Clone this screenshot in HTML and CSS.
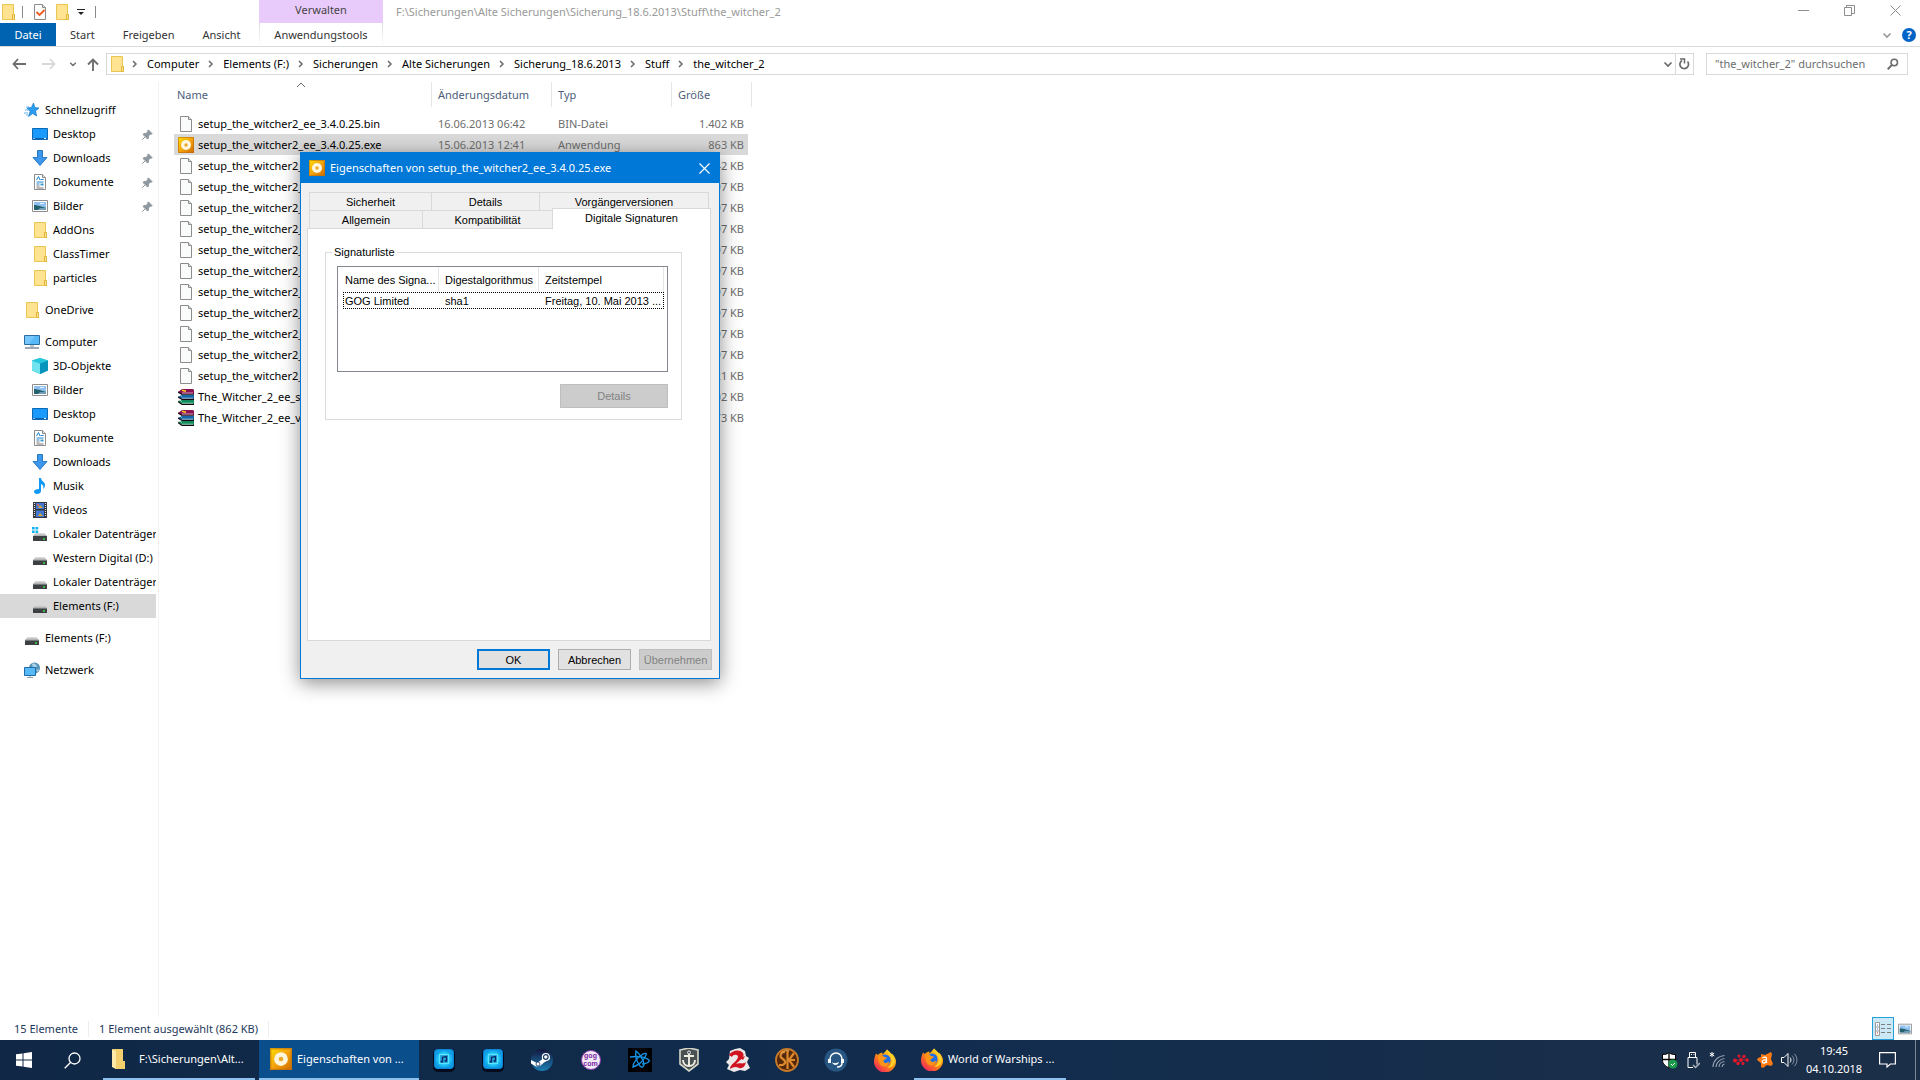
FILE: index.html
```
<!DOCTYPE html>
<html lang="de">
<head>
    <meta charset="UTF-8">
    <meta name="viewport" content="width=device-width, initial-scale=1.0">
    <title>the_witcher_2</title>
    <link rel="stylesheet" href="styles.css">
</head>
<body>
    <!-- Icon set -->
    <svg class="sprite" aria-hidden="true">
        <defs>
            <linearGradient id="gold" x1="0" y1="0" x2="1" y2="1"><stop offset="0" stop-color="#fbe000"/><stop offset=".5" stop-color="#f5a30c"/><stop offset="1" stop-color="#cf6a00"/></linearGradient>
            <linearGradient id="fox" x1="0.9" y1="0" x2="0.1" y2="1"><stop offset="0" stop-color="#ffe52e"/><stop offset=".5" stop-color="#ff8a10"/><stop offset="1" stop-color="#f0146a"/></linearGradient>
            <linearGradient id="drv" x1="0" y1="0" x2="0" y2="1"><stop offset="0" stop-color="#e2e2e2"/><stop offset="1" stop-color="#a9abad"/></linearGradient>
            <linearGradient id="steamg" x1="0" y1="0" x2="0" y2="1"><stop offset="0" stop-color="#14163c"/><stop offset="1" stop-color="#1b7fb5"/></linearGradient>
            <radialGradient id="tune"><stop offset="0" stop-color="#1b8fd0"/><stop offset=".6" stop-color="#27d0fa"/><stop offset="1" stop-color="#0f9be6"/></radialGradient>
        </defs>
        <symbol id="folder" viewBox="0 0 16 16"><path d="M2.5.5h11v10h1v5h-12z" fill="#ffe391" stroke="#eac54f"/><path d="M12.5 10.5h2v5h-2z" fill="#ffe391" stroke="#e3b53a"/></symbol>
        <symbol id="file" viewBox="0 0 16 16"><path d="M2.5.5h8l3 3v12h-11z" fill="#fafbfb" stroke="#8c8c8c"/><path d="M10.5.5v3h3" fill="#ddd" stroke="#8c8c8c"/></symbol>
        <symbol id="check" viewBox="0 0 16 16"><path d="M2.5.5h8l3 3v12h-11z" fill="#fafbfb" stroke="#8c8c8c"/><path d="M10.5.5v3h3" fill="#ddd" stroke="#8c8c8c"/><path d="M4.500 8l3 3 5-5" fill="none" stroke="#f05a1c" stroke-width="1.800"/></symbol>
        <symbol id="gog-exe" viewBox="0 0 16 16"><path d="M0 0h16v16H0z" fill="url(#gold)"/><path d="M.5.5h15v15H.5z" fill="none" stroke="#b86a10" stroke-opacity=".6"/><circle cx="8" cy="8" r="5" fill="#fff6de"/><circle cx="8" cy="8" r="1.700" fill="#e8a92c"/></symbol>
        <symbol id="rar" viewBox="0 0 16 16"><path d="M4 0h11l1 1v4H3L0 3z" fill="#8a1253"/><path d="M3 6h13v4H4L0 8z" fill="#1565a8"/><path d="M3 11h13v4H4l-4-3z" fill="#0f8a5a"/><path d="M4 5.300h12M4 10.400h12M4 15.400h12M0 3l4 2.500M0 8l4 2.500M0 12.500l4 3" fill="none" stroke="#14080e" stroke-width="1.100"/><path d="M0 5l4 2.500M0 10l4 2.500M4 4h11M4 9.200h11M4 14.200h11" fill="none" stroke="#fff" stroke-width=".8" stroke-opacity=".75"/><path d="M4 1.200l4 1" stroke="#ffd21f" stroke-width="1.500"/></symbol>
        <symbol id="star" viewBox="0 0 16 16"><path d="M9.500 1l1.300 4.600 4.200.400-3.500 3 1.200 5-4-2.500-4.200 3 1.600-5L3 6l4.500-.600z" fill="#2b9df0" stroke="#1377c8" stroke-width=".7"/><path d="M2 5h3M1 8h3M0 11h4M2 13h2" stroke="#63b5ef"/></symbol>
        <symbol id="desktop" viewBox="0 0 16 16"><path d="M.5 2.500h15v11H.5z" fill="#1a9bfc" stroke="#0d67b5"/><path d="M1 12.500h14" stroke="#0a5fb0"/><path d="M1.500 12.500h1M12 12.500h2" stroke="#fff"/></symbol>
        <symbol id="download" viewBox="0 0 16 16"><path d="M5.500.5h5v7h4.500L8 15.500 1 7.500h4.500z" fill="#3b97ea" stroke="#2a78c4"/></symbol>
        <symbol id="document" viewBox="0 0 16 16"><path d="M2.500.5h8l3 3v12h-11z" fill="#fff" stroke="#8c8c8c"/><path d="M10.500.5v3h3" fill="#ddd" stroke="#8c8c8c"/><path d="M4.500 6l2-3.500L8 6M8.500 5.500h3M4.500 8h7M4.500 10h3" fill="none" stroke="#2583cf"/><path d="M8.500 9.500h3v2h-3z" fill="#3b97c9"/><path d="M4.500 12h3M4.500 14h7" stroke="#777"/></symbol>
        <symbol id="picture" viewBox="0 0 16 16"><path d="M.5 2.500h15v11H.5z" fill="#fff" stroke="#8c8c8c"/><path d="M2 4h12v8H2z" fill="#8fc1f0"/><path d="M2 7c3 0 6 1 12 3v2H2z" fill="#24606e"/><path d="M8 10h6v2H6z" fill="#6f9db4"/><path d="M8 5.500h4" stroke="#e8f4ff"/></symbol>
        <symbol id="computer" viewBox="0 0 16 16"><path d="M.5 1.500h15v9H.5z" fill="#57b9f8" stroke="#2b6d9b"/><path d="M1 2h10L5 10H1z" fill="#8ad2ff" opacity=".6"/><path d="M6 11h4v2H6z" fill="#b9c3c9"/><path d="M1 14h14" stroke="#7b8c98" stroke-width="1.500"/></symbol>
        <symbol id="cube" viewBox="0 0 16 16"><path d="M8 0l8 2.500v10L8 16 0 12.500v-10z" fill="#14b4d3"/><path d="M0 2.500l8 3V16l-8-3.500z" fill="#6fe3ee"/><path d="M8 5.500l8-3v10L8 16z" fill="#0794bd"/><path d="M8 0l8 2.500-8 3-8-3z" fill="#27c7dd"/></symbol>
        <symbol id="music" viewBox="0 0 16 16"><path d="M7 0h2c0 3 4 4 4 7 0 2-1 3-2 4 1-3 0-4-2-5v7c0 2-2 3-4 3s-3-1-3-2.500S4 11 7 11z" fill="#0d99f5"/></symbol>
        <symbol id="video" viewBox="0 0 16 16"><path d="M1 0h14v16H1z" fill="#33363c"/><path d="M2.500 1v14M13.500 1v14" stroke="#ddd" stroke-width="1.200" stroke-dasharray="1 1"/><path d="M4 1h8v6H4zM4 8.500h8V15H4z" fill="#4178d3"/><path d="M6 6l2-3 3 3zM6 14l2-3 3 3z" fill="#d7a72e"/><path d="M5 2h2v2H5z" fill="#d0645a"/></symbol>
        <symbol id="drive" viewBox="0 0 16 16"><path d="M3.500 7h9L15 10H1z" fill="url(#drv)"/><path d="M1 10h14v5H1z" fill="#3d4042"/><path d="M1 10h14v1H1z" fill="#72777a"/><circle cx="12" cy="13" r="1" fill="#34e04a"/></symbol>
        <symbol id="windrive" viewBox="0 0 16 16"><path d="M3.500 7h9L15 10H1z" fill="url(#drv)"/><path d="M1 10h14v5H1z" fill="#3d4042"/><circle cx="12" cy="13" r="1" fill="#34e04a"/><path d="M0 1h2.700v2.600H0zM3.500 1h2.700v2.600H3.500zM0 4.400h2.700V7H0zM3.500 4.400h2.700V7H3.500z" fill="#12b4f0"/></symbol>
        <symbol id="network" viewBox="0 0 16 16"><circle cx="10.500" cy="6" r="5.500" fill="#5693b8"/><path d="M8 2c2-1 4 0 5 2l-2 3-2-1zM12 8l3-1-1 3z" fill="#a9d3e8"/><path d="M.5 5.500h11v8H.5z" fill="#57b9f8" stroke="#1e6ba5"/><path d="M3 15.500h6M6 14v1" stroke="#8fa3b0"/></symbol>
        <symbol id="pin" viewBox="0 0 12 12"><path d="M7 1l4 4-1 1-1-.3-2 2 .2 2L6 11 3.700 8.300.5 11.500 3.700 8.300 1 6l1.300-1.200 2 .2 2-2L6 2z" fill="#8e979e" stroke="#8e979e"/></symbol>
        <symbol id="chev-r" viewBox="0 0 8 10"><path d="M2 2l3 3-3 3" fill="none" stroke="#6a6a6a" stroke-width="1.500"/></symbol>
        <symbol id="chev-d" viewBox="0 0 10 10"><path d="M1.500 3.500L5 7l3.500-3.500" fill="none" stroke="currentColor" stroke-width="1.700"/></symbol>
        <symbol id="lens" viewBox="0 0 16 16"><circle cx="9.700" cy="6" r="4.300" fill="none" stroke="currentColor" stroke-width="2"/><path d="M6.600 9.200L1 15" stroke="currentColor" stroke-width="2.500"/></symbol>
        <symbol id="tune-icon" viewBox="0 0 22 24"><rect y="1" width="22" height="23" rx="5" fill="#020a1c"/><rect x="1" y="1" width="20" height="20" rx="4" fill="#0b86d8"/><rect x="2" y="2" width="18" height="18" rx="3" fill="url(#tune)"/><rect x="6.500" y="6.500" width="9" height="9" fill="#27a9e0" stroke="#5ce4fc"/><path d="M9.500 13.500V9.300l4-.8v4.200" fill="none" stroke="#082c66" stroke-width="1.400"/><path d="M7.700 13.700h2.300M11.700 12.900h2.300" stroke="#082c66" stroke-width="1.800"/></symbol>
        <symbol id="firefox" viewBox="0 0 22 22"><path d="M2 4l2 1.500C5 4 7 3 8.500 3L8 5c2-1 4-4 5-5 1 2 3 3 4 5l1-1c3 3 4 6 4 8a11 11 0 0 1-22 0C0 9 1 6 2 4z" fill="url(#fox)"/><circle cx="11" cy="10.500" r="5.500" fill="#1d6ee8"/><path d="M4 6c3-1 5 0 6 1.500l3 .5c-1 2-3 2-3.500 3.500C9.500 14 13 14 15 12c0 4-4 6-7 4.500S4 10 4 6z" fill="#ff9416"/><path d="M13 0c-1 3 4 5 4 9 2 4-1 8-4 9 5 1 8-3 7.500-7C20 7 17 3 13 0z" fill="#ffd32a"/></symbol>
    </svg>

    <!-- Explorer window -->
    <div class="explorer">
        <header class="titlebar">
            <div class="quick-access">
                <svg class="icon"><use href="#folder"/></svg>
                <span class="divider"></span>
                <button class="qat" aria-label="Eigenschaften"><svg class="icon"><use href="#check"/></svg></button>
                <button class="qat" aria-label="Neuer Ordner"><svg class="icon"><use href="#folder"/></svg></button>
                <button class="qat-more" aria-label="Anpassen"><svg width="8" height="8" viewBox="0 0 8 8"><path d="M0 1.500h8" stroke="#222"/><path d="M1 4h6L4 7z" fill="#222"/></svg></button>
                <span class="divider"></span>
            </div>
            <div class="context-title">Verwalten</div>
            <div class="window-title">F:\Sicherungen\Alte Sicherungen\Sicherung_18.6.2013\Stuff\the_witcher_2</div>
            <div class="window-controls">
                <button aria-label="Minimieren"><svg width="11" height="11" viewBox="0 0 11 11"><path d="M0 5.500h11"/></svg></button>
                <button aria-label="Wiederherstellen"><svg width="11" height="11" viewBox="0 0 11 11"><path d="M.5 2.500h7v8h-7zM2.500 2.500v-2h8v8h-3"/></svg></button>
                <button aria-label="Schließen"><svg width="11" height="11" viewBox="0 0 11 11"><path d="M.5.5l10 10M10.500.5l-10 10"/></svg></button>
            </div>
        </header>

        <nav class="ribbon">
            <div class="ribbon-tabs">
                <button class="file-tab">Datei</button>
                <button>Start</button>
                <button>Freigeben</button>
                <button>Ansicht</button>
            </div>
            <button class="context-tab">Anwendungstools</button>
            <div class="ribbon-end">
                <button class="collapse" aria-label="Menüband"><svg width="10" height="10"><use href="#chev-d"/></svg></button>
                <button class="help" aria-label="Hilfe">?</button>
            </div>
        </nav>

        <div class="address-row">
            <div class="history">
                <button class="back" aria-label="Zurück"><svg width="14" height="12" viewBox="0 0 14 12"><path d="M14 6H1.500M6 1L1.500 6 6 11" fill="none" stroke="#6e6e6e" stroke-width="1.800"/></svg></button>
                <button class="forward" aria-label="Vorwärts"><svg width="14" height="12" viewBox="0 0 14 12"><path d="M0 6h12.500M8 1l4.500 5L8 11" fill="none" stroke="#d8d8d8" stroke-width="1.800"/></svg></button>
                <button class="recent" aria-label="Verlauf"><svg width="8" height="8"><use href="#chev-d"/></svg></button>
                <button class="up" aria-label="Nach oben"><svg width="12" height="13" viewBox="0 0 12 13"><path d="M6 13V1.500M1 6.500l5-5 5 5" fill="none" stroke="#6e6e6e" stroke-width="1.900"/></svg></button>
            </div>
            <div class="address">
                <svg class="icon"><use href="#folder"/></svg>
                <svg class="crumb-arrow"><use href="#chev-r"/></svg><a href="#">Computer</a>
                <svg class="crumb-arrow"><use href="#chev-r"/></svg><a href="#">Elements (F:)</a>
                <svg class="crumb-arrow"><use href="#chev-r"/></svg><a href="#">Sicherungen</a>
                <svg class="crumb-arrow"><use href="#chev-r"/></svg><a href="#">Alte Sicherungen</a>
                <svg class="crumb-arrow"><use href="#chev-r"/></svg><a href="#">Sicherung_18.6.2013</a>
                <svg class="crumb-arrow"><use href="#chev-r"/></svg><a href="#">Stuff</a>
                <svg class="crumb-arrow"><use href="#chev-r"/></svg><a href="#">the_witcher_2</a>
                <button class="address-drop" aria-label="Vorherige Orte"><svg class="small-icon"><use href="#chev-d"/></svg></button>
                <button class="refresh" aria-label="Aktualisieren"><svg width="11" height="12" viewBox="0 0 11 12"><path d="M3 2.600A4.300 4.300 0 1 0 8.500 3.500" fill="none" stroke="#6a6a6a" stroke-width="1.700"/><path d="M5.500 5.500V1H1" fill="none" stroke="#6a6a6a" stroke-width="1.500"/></svg></button>
            </div>
            <div class="search">
                <input type="text" aria-label="Suchen" placeholder="&quot;the_witcher_2&quot; durchsuchen">
                <svg width="12" height="12"><use href="#lens"/></svg>
            </div>
        </div>

        <div class="content">
            <aside class="sidebar">
                <ul>
                    <li class="root"><svg class="icon"><use href="#star"/></svg><span>Schnellzugriff</span></li>
                    <li><svg class="icon"><use href="#desktop"/></svg><span>Desktop</span><svg class="pin"><use href="#pin"/></svg></li>
                    <li><svg class="icon"><use href="#download"/></svg><span>Downloads</span><svg class="pin"><use href="#pin"/></svg></li>
                    <li><svg class="icon"><use href="#document"/></svg><span>Dokumente</span><svg class="pin"><use href="#pin"/></svg></li>
                    <li><svg class="icon"><use href="#picture"/></svg><span>Bilder</span><svg class="pin"><use href="#pin"/></svg></li>
                    <li><svg class="icon"><use href="#folder"/></svg><span>AddOns</span></li>
                    <li><svg class="icon"><use href="#folder"/></svg><span>ClassTimer</span></li>
                    <li><svg class="icon"><use href="#folder"/></svg><span>particles</span></li>
                </ul>
                <ul>
                    <li class="root"><svg class="icon"><use href="#folder"/></svg><span>OneDrive</span></li>
                </ul>
                <ul>
                    <li class="root"><svg class="icon"><use href="#computer"/></svg><span>Computer</span></li>
                    <li><svg class="icon"><use href="#cube"/></svg><span>3D-Objekte</span></li>
                    <li><svg class="icon"><use href="#picture"/></svg><span>Bilder</span></li>
                    <li><svg class="icon"><use href="#desktop"/></svg><span>Desktop</span></li>
                    <li><svg class="icon"><use href="#document"/></svg><span>Dokumente</span></li>
                    <li><svg class="icon"><use href="#download"/></svg><span>Downloads</span></li>
                    <li><svg class="icon"><use href="#music"/></svg><span>Musik</span></li>
                    <li><svg class="icon"><use href="#video"/></svg><span>Videos</span></li>
                    <li><svg class="icon"><use href="#windrive"/></svg><span>Lokaler Datenträger</span></li>
                    <li><svg class="icon"><use href="#drive"/></svg><span>Western Digital (D:)</span></li>
                    <li><svg class="icon"><use href="#drive"/></svg><span>Lokaler Datenträger</span></li>
                    <li class="selected"><svg class="icon"><use href="#drive"/></svg><span>Elements (F:)</span></li>
                </ul>
                <ul>
                    <li class="root"><svg class="icon"><use href="#drive"/></svg><span>Elements (F:)</span></li>
                </ul>
                <ul>
                    <li class="root"><svg class="icon"><use href="#network"/></svg><span>Netzwerk</span></li>
                </ul>
            </aside>

            <main class="file-list">
                <table class="files">
                    <thead>
                        <tr><th class="col-name">Name<svg class="sort" viewBox="0 0 10 6"><path d="M1 5l4-4 4 4" fill="none" stroke="#6a6a6a"/></svg></th><th class="col-date">Änderungsdatum</th><th class="col-type">Typ</th><th class="col-size">Größe</th></tr>
                    </thead>
                    <tbody>
                        <tr><td><svg class="icon"><use href="#file"/></svg>setup_the_witcher2_ee_3.4.0.25.bin</td><td>16.06.2013 06:42</td><td>BIN-Datei</td><td>1.402 KB</td></tr>
                        <tr class="selected"><td><svg class="icon"><use href="#gog-exe"/></svg>setup_the_witcher2_ee_3.4.0.25.exe</td><td>15.06.2013 12:41</td><td>Anwendung</td><td>863 KB</td></tr>
                        <tr><td><svg class="icon"><use href="#file"/></svg>setup_the_witcher2_ee</td><td></td><td></td><td>42 KB</td></tr>
                        <tr><td><svg class="icon"><use href="#file"/></svg>setup_the_witcher2_ee</td><td></td><td></td><td>97 KB</td></tr>
                        <tr><td><svg class="icon"><use href="#file"/></svg>setup_the_witcher2_ee</td><td></td><td></td><td>97 KB</td></tr>
                        <tr><td><svg class="icon"><use href="#file"/></svg>setup_the_witcher2_ee</td><td></td><td></td><td>97 KB</td></tr>
                        <tr><td><svg class="icon"><use href="#file"/></svg>setup_the_witcher2_ee</td><td></td><td></td><td>97 KB</td></tr>
                        <tr><td><svg class="icon"><use href="#file"/></svg>setup_the_witcher2_ee</td><td></td><td></td><td>97 KB</td></tr>
                        <tr><td><svg class="icon"><use href="#file"/></svg>setup_the_witcher2_ee</td><td></td><td></td><td>97 KB</td></tr>
                        <tr><td><svg class="icon"><use href="#file"/></svg>setup_the_witcher2_ee</td><td></td><td></td><td>97 KB</td></tr>
                        <tr><td><svg class="icon"><use href="#file"/></svg>setup_the_witcher2_ee</td><td></td><td></td><td>97 KB</td></tr>
                        <tr><td><svg class="icon"><use href="#file"/></svg>setup_the_witcher2_ee</td><td></td><td></td><td>97 KB</td></tr>
                        <tr><td><svg class="icon"><use href="#file"/></svg>setup_the_witcher2_ee</td><td></td><td></td><td>21 KB</td></tr>
                        <tr><td><svg class="icon"><use href="#rar"/></svg>The_Witcher_2_ee_s</td><td></td><td></td><td>02 KB</td></tr>
                        <tr><td><svg class="icon"><use href="#rar"/></svg>The_Witcher_2_ee_v</td><td></td><td></td><td>73 KB</td></tr>
                    </tbody>
                </table>
            </main>
        </div>

        <footer class="statusbar">
            <span>15 Elemente</span>
            <span>1 Element ausgewählt (862 KB)</span>
            <div class="view-modes">
                <button class="active" aria-label="Details"><svg width="18" height="14" viewBox="0 0 18 14"><path d="M1.500.5h4v13h-4zM1.500 5h4M1.500 9h4" fill="#fff" stroke="#999"/><path d="M3 3h1M3 7h1" stroke="#2a7fd0"/><path d="M3 11h1" stroke="#d02a2a"/><path d="M7 2.500h4M13 2.500h4M7 6.500h4M13 6.500h4M7 10.500h4M13 10.500h4" stroke="#7d7d7d"/></svg></button>
                <button aria-label="Große Symbole"><svg width="14" height="14"><use href="#picture"/></svg></button>
            </div>
        </footer>
    </div>

    <!-- Taskbar -->
    <div class="taskbar">
        <button class="sys" aria-label="Start"><svg width="16" height="16" viewBox="0 0 16 16"><path d="M0 2.300L6.500 1.400v6.100H0zM7.500 1.200L16 0v7.500H7.500zM0 8.500h6.500v6.100L0 13.700zM7.500 8.500H16V16l-8.500-1.200z" fill="#fff"/></svg></button>
        <button class="sys" aria-label="Suche"><svg width="17" height="17" viewBox="0 0 17 17"><circle cx="10.500" cy="6.500" r="5.500" fill="none" stroke="#fff" stroke-width="1.300"/><path d="M6.700 10.300L.7 16.300" stroke="#fff" stroke-width="1.300"/></svg></button>
        <button class="task first"><svg width="22" height="22" viewBox="0 0 22 22"><path d="M0 1h11v12h2v8H3V3z" fill="#f4cf6e"/><path d="M0 1l4 2v18l-4-2z" fill="#ffe9a8"/></svg><span>F:\Sicherungen\Alt...</span></button>
        <button class="task current"><svg width="22" height="22"><use href="#gog-exe"/></svg><span>Eigenschaften von ...</span></button>
        <div class="pinned">
            <button aria-label="Musik 1"><svg width="22" height="24"><use href="#tune-icon"/></svg></button>
            <button aria-label="Musik 2"><svg width="22" height="24"><use href="#tune-icon"/></svg></button>
            <button aria-label="Steam"><svg width="22" height="22" viewBox="0 0 22 22"><circle cx="11" cy="11" r="11" fill="url(#steamg)"/><path d="M0 11l6 3 5-3.500L11 7l7-1 1 4-6 3.500-4 3.500-4 .5-5-3z" fill="#fff"/><circle cx="14.800" cy="8" r="4" fill="#fff"/><circle cx="14.800" cy="8" r="2.300" fill="none" stroke="#17365f" stroke-width="1.200"/><circle cx="7" cy="15" r="2" fill="#fff" stroke="#17365f" stroke-width=".8"/></svg></button>
            <button aria-label="GOG"><span class="gog"><span>gog</span><span>com</span></span></button>
            <button aria-label="Battle.net"><svg width="24" height="24" viewBox="0 0 24 24"><path d="M0 0h24v24H0z" fill="#000"/><g fill="none" stroke="#1592e6" stroke-width="1.400"><path d="M8 3c3 2 7 8 8 13 0 3-2 4-4 2-3-4-5-10-4-15z"/><path d="M2 9c5-1 14-1 19 3 1 2-3 4-7 4"/><path d="M5 19c0-4 4-9 10-13 2-1 4-1 3 1-2 5-7 10-13 12z"/></g></svg></button>
            <button aria-label="World of Warships"><svg width="20" height="24" viewBox="0 0 20 24"><path d="M1 2l9-2 9 2v14l-9 7-9-7z" fill="#4a5153" stroke="#d6d6c8" stroke-width="1.600"/><circle cx="10" cy="4.500" r="1.500" fill="none" stroke="#eee"/><path d="M10 6v12M5 8h10M4 12c0 4 3 6 6 6s6-2 6-6" fill="none" stroke="#f0eee2" stroke-width="1.900"/></svg></button>
            <button aria-label="Guild Wars 2"><svg width="24" height="24" viewBox="0 0 24 24"><path d="M4 3l5-2 5-1 5 3 1 5 3 2-2 4 3 6-5 3-5-1-6 2-7-3 2-4-3-3 3-3z" fill="#eee9e9"/><path d="M3 7c3-5 11-6 14-2 2 4-2 6-5 9l-2 2c4-2 7 1 10-2-1 5-4 7-7 6-3-2-6-1-9 1 0-5 7-7 8-12 0-3-5-3-6 0z" fill="#d01420"/><path d="M14 10l5-2-2 4z" fill="#d01420"/></svg></button>
            <button aria-label="SK"><svg width="24" height="24" viewBox="0 0 24 24"><circle cx="12" cy="12" r="11" fill="#54270a" stroke="#c87a28" stroke-width="1.800"/><path d="M10 4C5 4 4 9 8 11c4 3 2 7-4 6M12.500 3v18M19 5l-5 7 5 7M14 12h6" fill="none" stroke="#dd8a2e" stroke-width="2.200"/><path d="M6 5c2-2 5-3 8-2" fill="none" stroke="#f7b455"/></svg></button>
            <button aria-label="TeamSpeak"><svg width="24" height="24" viewBox="0 0 24 24"><circle cx="12" cy="12" r="11.500" fill="#275682"/><path d="M6 13V11a6 6 0 0 1 12 0v2" fill="none" stroke="#fff" stroke-width="1.500"/><path d="M4 11h3v4H4zM17 11h3v4h-3z" fill="#fff"/><path d="M8 14c2 2 5 1 7 0-1 4-6 4-7 0z" fill="#fff"/><path d="M18 15c0 3-2 4-5 4" fill="none" stroke="#fff" stroke-width="1.500"/></svg></button>
            <button aria-label="Firefox"><svg width="22" height="23"><use href="#firefox"/></svg></button>
        </div>
        <button class="task first browser"><svg width="22" height="23"><use href="#firefox"/></svg><span>World of Warships ...</span></button>

        <div class="tray">
            <button aria-label="Sicherheit"><svg width="17" height="17" viewBox="0 0 17 17"><path d="M8 .7c2 1.500 4 1.800 6.500 1.800V8c0 4-3 6-6.500 8-3.500-2-6.500-4-6.500-8V2.500C4 2.500 6 2.200 8 .7z" fill="#fff" stroke="#000"/><path d="M8 1v14M2 7.500h12" stroke="#000" stroke-width="1.300"/><circle cx="12" cy="12" r="4.500" fill="#1a9a4a"/><path d="M10 12l1.500 1.500L14 11" fill="none" stroke="#fff"/></svg></button>
            <button aria-label="USB"><svg width="14" height="17" viewBox="0 0 14 17"><path d="M3.500.5h6v5h-6zM5 2.500h1M7.500 2.500h1M2 5.500h9v7M2 5.500v10h5" fill="none" stroke="#fff"/><path d="M7 13l2.500 2.500L14 11" fill="none" stroke="#aab4bf" stroke-width="1.500"/></svg></button>
            <button aria-label="WLAN"><svg width="16" height="16" viewBox="0 0 16 16"><path d="M3 0v5M.8 1.200l4.400 2.600M.8 3.800l4.400-2.600" stroke="#fff"/><path d="M4 15C4 9 9 4 15.500 3.500M7 15c0-4 4-8 8.500-8.500M10 15c0-3 2-5 5.500-5.500M13 15c0-2 1-2.500 2.500-3" fill="none" stroke="#93a1af" stroke-width="1.100"/></svg></button>
            <button aria-label="Monitor"><svg width="16" height="12" viewBox="0 0 16 12" fill="#e2182a"><circle cx="8" cy="6" r="1.800"/><circle cx="6" cy="2" r="1.400"/><circle cx="11" cy="2.500" r="1.700"/><circle cx="2" cy="6.500" r="2"/><circle cx="5" cy="9.500" r="1.700"/><circle cx="14" cy="6" r="1.800"/><circle cx="10" cy="9.500" r="1.500"/><path d="M2 6h12M6 2l4 8M11 2L5 10" stroke="#e2182a" stroke-width=".7"/></svg></button>
            <button aria-label="Avast"><svg width="16" height="16" viewBox="0 0 16 16"><path d="M4 2l4 1 6-3 1 2-1 5 2 5-2 2-4-1-4 3-2-1 0-4-4-3 1-2 3-1z" fill="#ff7a12"/><path d="M5.500 6c2-1.500 4-1 4 1v4M9 8c-4-1-5 3-2 3 1 0 2-1 2-2" fill="none" stroke="#fff" stroke-width="1.300"/></svg></button>
            <button aria-label="Lautstärke"><svg width="17" height="14" viewBox="0 0 17 14"><path d="M.5 4.500h2.500l4-4v13l-4-4H.5z" fill="none" stroke="#fff"/><path d="M9 4.500c1.300 1.500 1.300 3.500 0 5" fill="none" stroke="#fff"/><path d="M11 2.500c2.500 3 2.500 6 0 9M13.500.8c3.200 4 3.200 8.400 0 12.400" fill="none" stroke="#8795a5"/></svg></button>
        </div>
        <div class="clock"><span>19:45</span><span>04.10.2018</span></div>
        <button class="notes" aria-label="Info-Center"><svg width="17" height="16" viewBox="0 0 17 16"><path d="M.6.6h15.800v11.400h-5L8 15v-3H.6z" fill="none" stroke="#fff" stroke-width="1.200"/></svg></button>
        <button class="show-desktop" aria-label="Desktop anzeigen"></button>
    </div>

    <!-- Properties window -->
    <section class="dialog" role="dialog" aria-label="Eigenschaften">
        <header class="dialog-title">
            <svg class="icon"><use href="#gog-exe"/></svg>
            <h1>Eigenschaften von setup_the_witcher2_ee_3.4.0.25.exe</h1>
            <button aria-label="Schließen"><svg width="11" height="11" viewBox="0 0 11 11"><path d="M.5.5l10 10M10.500.5l-10 10" stroke="#fff" stroke-width="1.200"/></svg></button>
        </header>
        <div class="dialog-body">
            <div class="tab-row back-row">
                <button>Sicherheit</button>
                <button>Details</button>
                <button>Vorgängerversionen</button>
            </div>
            <div class="tab-row front-row">
                <button>Allgemein</button>
                <button>Kompatibilität</button>
                <button class="active">Digitale Signaturen</button>
            </div>
            <div class="panel">
                <fieldset>
                    <legend>Signaturliste</legend>
                    <div class="list-box">
                        <table class="signatures">
                            <thead><tr><th class="signer">Name des Signa...</th><th class="digest">Digestalgorithmus</th><th>Zeitstempel</th></tr></thead>
                            <tbody><tr><td>GOG Limited</td><td>sha1</td><td>Freitag, 10. Mai 2013 ...</td></tr></tbody>
                        </table>
                    </div>
                    <button class="btn details" disabled>Details</button>
                </fieldset>
            </div>
            <div class="dialog-buttons">
                <button class="btn default">OK</button>
                <button class="btn">Abbrechen</button>
                <button class="btn" disabled>Übernehmen</button>
            </div>
        </div>
    </section>
</body>
</html>
```
FILE: styles.css
```
* {
    margin: 0;
    padding: 0;
    box-sizing: border-box;
}

body {
    display: flex;
    flex-direction: column;
    height: 100vh;
    overflow: hidden;
    background: #fff;
    color: #000;
    font-family: "Noto Sans", "Open Sans", sans-serif;
    font-size: 11px;
    line-height: 16px;
}

button {
    border: none;
    background: none;
    font: inherit;
    color: inherit;
    display: flex;
    align-items: center;
    justify-content: center;
}

a {
    color: inherit;
    text-decoration: none;
}

svg {
    flex: none;
}

.sprite {
    position: absolute;
    width: 0;
    height: 0;
}

.icon {
    width: 16px;
    height: 16px;
}

.small-icon {
    width: 10px;
    height: 10px;
    color: #6a6a6a;
}

/* Explorer window */
.explorer {
    flex: 1;
    min-height: 0;
    display: flex;
    flex-direction: column;
}

.titlebar {
    display: flex;
    height: 23px;
}

.quick-access {
    width: 259px;
    display: flex;
    align-items: center;
}

.divider {
    width: 1px;
    height: 12px;
    margin: 0 6px;
    background: #8a8a8a;
}

.qat {
    width: 22px;
}

.qat-more {
    width: 16px;
}

.context-title {
    width: 124px;
    padding-top: 2px;
    background: #e9cbfb;
    color: #444;
    text-align: center;
}

.window-title {
    flex: 1;
    padding: 4px 13px;
    color: #999;
}

.window-controls {
    display: flex;
    padding-right: 2px;
}

.window-controls button {
    width: 46px;
    height: 21px;
}

.window-controls path {
    fill: none;
    stroke: #8f8f8f;
}

/* Ribbon */
.ribbon {
    display: flex;
    height: 24px;
    border-bottom: 1px solid #dadbdc;
    color: #333;
}

.ribbon-tabs {
    width: 259px;
    display: flex;
}

.ribbon-tabs button {
    padding: 0 14px;
}

.ribbon-tabs .file-tab {
    width: 56px;
    background: #0063b1;
    color: #fff;
}

.context-tab {
    width: 124px;
    border: 1px solid;
    border-width: 0 1px;
    border-image: linear-gradient(#dcdcdc, #fff) 1;
}

.ribbon-end {
    display: flex;
    align-items: center;
    gap: 10px;
    margin-left: auto;
    padding-right: 4px;
}

.collapse {
    color: #999;
}

.help {
    width: 14px;
    height: 14px;
    border-radius: 50%;
    background: #0063c6;
    color: #fff;
    font-weight: bold;
}

/* Address row */
.address-row {
    display: flex;
    padding: 6px 12px 7px 0;
}

.history {
    display: flex;
    width: 106px;
    padding-left: 5px;
    color: #6a6a6a;
}

.back {
    width: 28px;
}

.forward {
    width: 32px;
}

.recent {
    width: 15px;
}

.up {
    width: 26px;
}

.address {
    flex: 1;
    display: flex;
    align-items: center;
    height: 22px;
    padding-left: 2px;
    border: 1px solid #d9d9d9;
}

.address .icon {
    margin-right: -2px;
}

.crumb-arrow {
    width: 8px;
    height: 10px;
    margin: 0 8px;
}

.address-drop {
    width: 14px;
    height: 20px;
    margin-left: auto;
}

.refresh {
    width: 18px;
    height: 20px;
    border-left: 1px solid #d9d9d9;
}

.search {
    display: flex;
    align-items: center;
    width: 202px;
    height: 22px;
    margin-left: 12px;
    padding: 0 8px;
    border: 1px solid #d9d9d9;
    color: #6a6a6a;
}

.search input {
    flex: 1;
    min-width: 0;
    border: none;
    outline: none;
    font: inherit;
}

.search input::placeholder {
    color: #6d6d6d;
}

/* Sidebar and file list */
.content {
    flex: 1;
    min-height: 0;
    display: flex;
}

.sidebar {
    width: 159px;
    padding: 16px 2px 0 0;
    border-right: 1px solid #f2f2f2;
}

.sidebar ul {
    list-style: none;
    margin-bottom: 8px;
}

.sidebar li {
    display: flex;
    align-items: center;
    gap: 5px;
    height: 24px;
    padding-left: 32px;
    white-space: nowrap;
    overflow: hidden;
}

.sidebar .root {
    padding-left: 24px;
}

.selected {
    background: #d9d9d9;
}

.pin {
    width: 11px;
    height: 11px;
    margin: 0 3px 0 auto;
}

.file-list {
    flex: 1;
    padding-left: 15px;
}

.files {
    width: 578px;
    table-layout: fixed;
    border-collapse: separate;
    border-spacing: 0;
}

.files th {
    position: relative;
    height: 25px;
    padding-left: 6px;
    border-right: 1px solid #e5e5e5;
    font-weight: normal;
    text-align: left;
    color: #4c607a;
}

.files .col-name {
    width: 258px;
    padding-left: 3px;
}

.col-date,
.col-type {
    width: 120px;
}

.col-size {
    width: 80px;
}

.sort {
    position: absolute;
    top: 0;
    left: 122px;
    width: 10px;
    height: 6px;
}

.files tbody::before {
    content: "";
    display: block;
    height: 6px;
}

.files td {
    height: 21px;
    padding-left: 6px;
    color: #6d6d6d;
    white-space: nowrap;
}

.files td:first-child {
    display: flex;
    align-items: center;
    gap: 4px;
    padding-left: 4px;
    color: #000;
}

.files td:last-child {
    padding-right: 4px;
    border-right: 4px solid #fff;
    text-align: right;
}

/* Status bar */
.statusbar {
    display: flex;
    align-items: center;
    height: 23px;
    padding-left: 4px;
    color: #1e395b;
}

.statusbar span {
    padding: 0 10px;
    border-right: 1px solid #eee;
}

.view-modes {
    display: flex;
    margin-left: auto;
    padding-right: 4px;
}

.view-modes button {
    width: 22px;
    height: 23px;
}

.view-modes .active {
    border: 1px solid #26a0da;
    background: #cbe8f6;
}

/* Taskbar */
.taskbar {
    display: flex;
    height: 40px;
    background: linear-gradient(90deg, #102846, #112c4e 50%, #1c2f48);
    color: #fff;
}

.sys {
    width: 48px;
}

.task {
    width: 160px;
    padding-left: 11px;
    gap: 5px;
    justify-content: flex-start;
    border-bottom: 2px solid #8fc1ee;
}

.task.first {
    width: 152px;
    margin: 0 4px 0 7px;
    padding-left: 9px;
}

.task.current {
    background: #0b4e8c;
}

.task.first.browser {
    margin-left: 5px;
    padding-left: 7px;
}

.pinned {
    display: flex;
}

.pinned button {
    width: 49px;
}

.gog {
    display: flex;
    flex-direction: column;
    align-items: center;
    justify-content: center;
    width: 20px;
    height: 20px;
    border: 1px solid #8a3aa8;
    border-radius: 50%;
    background: #f3eaf7;
    color: #7a1fa0;
    font-family: "Liberation Sans", Arial, sans-serif;
    font-size: 7px;
    font-weight: bold;
    line-height: 8px;
}

.tray {
    display: flex;
    margin-left: auto;
}

.tray button {
    width: 24px;
}

.clock {
    display: flex;
    flex-direction: column;
    justify-content: center;
    width: 66px;
    line-height: 18px;
    text-align: center;
}

.notes {
    width: 40px;
    margin-right: 8px;
}

.show-desktop {
    width: 5px;
    border-left: 1px solid #7b8794;
}

/* Properties window */
.dialog {
    position: absolute;
    top: 152px;
    left: 300px;
    width: 420px;
    border: 1px solid #0078d7;
    background: #f0f0f0;
    box-shadow: 0 4px 18px rgba(0, 0, 0, 0.45);
    font-family: "Liberation Sans", Arial, sans-serif;
}

.dialog-title {
    display: flex;
    align-items: center;
    gap: 5px;
    height: 30px;
    padding-left: 8px;
    background: #0078d7;
    color: #fff;
    font-family: "Noto Sans", "Open Sans", sans-serif;
}

.dialog-title h1 {
    flex: 1;
    font-size: 11px;
    font-weight: normal;
}

.dialog-title button {
    width: 30px;
    height: 28px;
}

.dialog-body {
    padding: 9px 7px 8px 6px;
}

.tab-row {
    display: flex;
    height: 18px;
    padding: 0 2px;
}

.tab-row button {
    border: 1px solid #d9d9d9;
    border-width: 1px 0 0 1px;
}

.back-row button {
    width: 108px;
}

.back-row button:first-child {
    width: 122px;
}

.back-row button:last-child {
    width: 170px;
    border-right-width: 1px;
}

.front-row {
    padding-right: 0;
}

.front-row button {
    width: 130px;
}

.front-row button:first-child {
    width: 113px;
}

.front-row .active {
    z-index: 1;
    width: 159px;
    height: 21px;
    margin-top: -2px;
    padding-bottom: 2px;
    border-right-width: 1px;
    background: #fff;
}

.panel {
    height: 413px;
    margin-right: 1px;
    padding: 16px 28px 0 17px;
    border: 1px solid #d9d9d9;
    background: #fff;
}

fieldset {
    padding: 7px 13px 11px 11px;
    border: 1px solid #dcdcdc;
}

legend {
    padding: 0 2px;
    margin-left: -5px;
    line-height: 14px;
}

.list-box {
    height: 106px;
    padding-left: 5px;
    border: 1px solid #828790;
}

.signatures {
    width: 321px;
    table-layout: fixed;
    border-collapse: separate;
    border-spacing: 0;
    white-space: nowrap;
}

.signatures th {
    height: 25px;
    padding-left: 6px;
    border-right: 1px solid #e5e5e5;
    font-weight: normal;
    text-align: left;
}

.signatures td {
    height: 17px;
    padding-left: 6px;
}

.signatures th:first-child,
.signatures td:first-child {
    padding-left: 2px;
}

.signatures .signer {
    width: 96px;
}

.signatures .digest {
    width: 100px;
}

.signatures tbody tr {
    outline: 1px dotted #000;
    outline-offset: -1px;
}

.btn {
    width: 73px;
    height: 21px;
    border: 1px solid #adadad;
    background: #e1e1e1;
}

.btn:disabled {
    border-color: #bfbfbf;
    background: #ccc;
    color: #838383;
}

.btn.default {
    border: 2px solid #0078d7;
}

.btn.details {
    width: 108px;
    height: 24px;
    margin: 12px 0 0 auto;
}

.dialog-buttons {
    display: flex;
    justify-content: flex-end;
    gap: 8px;
    padding-top: 8px;
}
```
